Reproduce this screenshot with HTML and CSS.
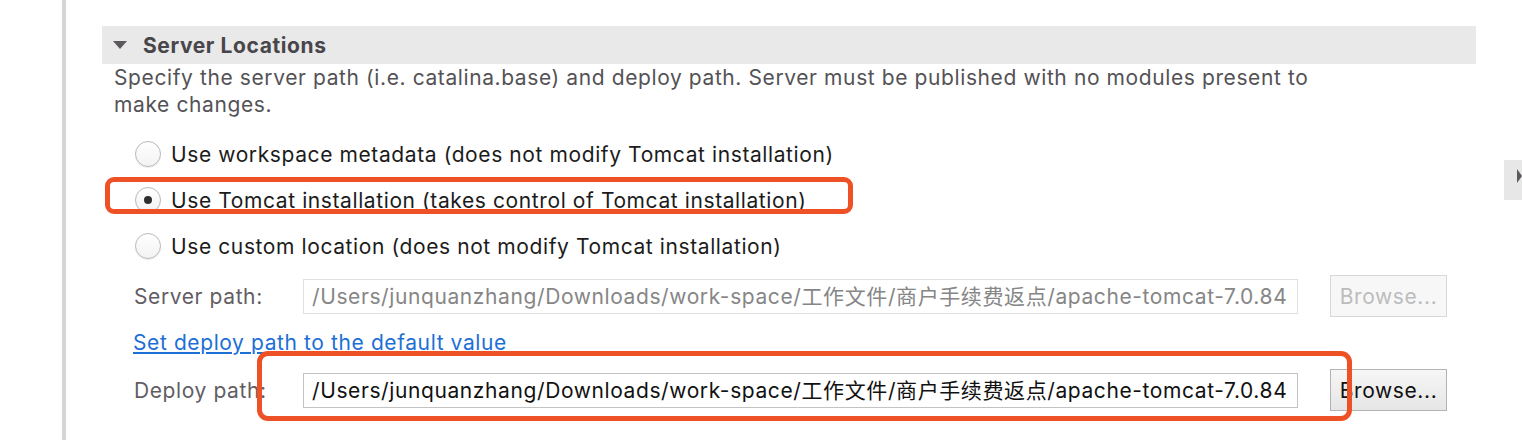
FILE: index.html
```html
<!DOCTYPE html>
<html>

<head>
	<meta charset="utf-8">
	<title>Server Locations</title>
	<meta name="viewport" content="width=device-width, initial-scale=1">
	<link rel="stylesheet" href="styles.css">
</head>

<body>
	<div class='editor'>
		<div class='editor__margin'></div>
		<main class='editor__page'>
			<section class='section'>
				<div class='section__head'>
					<span class='section__twisty'></span>
					<h2 class='section__title'>Server Locations</h2>
				</div>
				<div class='section__body'>
					<p class='desc'>Specify the server path (i.e. catalina.base) and deploy path. Server must be published with no modules present to make changes.</p>

					<div class='radios'>
						<label class='radio'>
							<span class='radio__dot'></span>
							<span>Use workspace metadata (does not modify Tomcat installation)</span>
						</label>
						<label class='radio is-checked'>
							<span class='radio__dot'></span>
							<span>Use Tomcat installation (takes control of Tomcat installation)</span>
						</label>
						<label class='radio'>
							<span class='radio__dot'></span>
							<span>Use custom location (does not modify Tomcat installation)</span>
						</label>
					</div>

					<div class='field is-disabled'>
						<span class='field__label'>Server path:</span>
						<div class='field__input'>/Users/junquanzhang/Downloads/work-space/工作文件/商户手续费返点/apache-tomcat-7.0.84</div>
						<button class='btn'>Browse...</button>
					</div>

					<a class='link' href='#'>Set deploy path to the default value</a>

					<div class='field'>
						<span class='field__label'>Deploy path:</span>
						<div class='field__input'>/Users/junquanzhang/Downloads/work-space/工作文件/商户手续费返点/apache-tomcat-7.0.84</div>
						<button class='btn'>Browse...</button>
					</div>
				</div>
			</section>
		</main>

		<div class='side-tab'></div>

		<!-- red annotation boxes drawn over the screenshot -->
		<div class='mark mark--radio'></div>
		<div class='mark mark--deploy'></div>
	</div>
</body>

</html>
```

FILE: styles.css
```css
* {
	box-sizing: border-box;
}

html,
body {
	margin: 0;
	padding: 0;
}

body {
	background-color: #fff;
	font-family: Inter, "Noto Sans", "Noto Sans CJK SC", sans-serif;
	font-size: 21px;
	letter-spacing: 0.6px;
	color: #1c1c1c;
	overflow: hidden;
}

p {
	margin: 0;
}

.editor {
	position: relative;
	display: flex;
	width: 1522px;
	height: 440px;
}

.editor__margin {
	width: 66px;
	flex: none;
	border-right: 4px solid #d5d5d5;
}

.editor__page {
	flex: 1;
	padding: 26px 0 0 36px;
}

.section {
	width: 1374px;
}

.section__head {
	display: flex;
	align-items: center;
	height: 38px;
	padding-left: 11px;
	background-color: #e9e9e9;
}

.section__twisty {
	width: 0;
	height: 0;
	border-left: 7px solid transparent;
	border-right: 7px solid transparent;
	border-top: 8px solid #5d575e;
	margin-right: 16px;
}

.section__title {
	margin: 0;
	font-size: 21px;
	font-weight: 700;
	color: #48464a;
}

.section__body {
	padding-left: 12px;
}

.desc {
	max-width: 1215px;
	line-height: 27px;
	color: #545256;
}

.radios {
	margin-top: 13px;
	padding-left: 21px;
}

.radio {
	display: flex;
	align-items: center;
	height: 46px;
	gap: 10px;
}

.radio__dot {
	display: flex;
	align-items: center;
	justify-content: center;
	width: 26px;
	height: 26px;
	border-radius: 50%;
	border: 1px solid #b9b9b9;
	background: linear-gradient(#fff, #f3f3f3);
	box-shadow: 0 1px 1px rgba(0, 0, 0, 0.08);
}

.radio.is-checked .radio__dot::after {
	content: '';
	width: 8px;
	height: 8px;
	border-radius: 50%;
	background-color: #2e2e2e;
}

.field {
	display: flex;
	align-items: center;
	height: 42px;
	margin-top: 6px;
	padding-left: 20px;
}

.field__label {
	width: 169px;
	color: #625d63;
}

.field__input {
	width: 995px;
	height: 35px;
	line-height: 33px;
	padding: 0 8px;
	border: 1px solid #c3c3c3;
	white-space: nowrap;
	overflow: hidden;
	color: #111;
}

.btn {
	margin-left: 32px;
	width: 117px;
	height: 42px;
	font: inherit;
	letter-spacing: inherit;
	color: #111;
	border: 1px solid #b3b3b3;
	background: linear-gradient(#f6f6f6, #e6e6e6);
	padding: 0;
}

.field.is-disabled .field__input {
	border-color: #e0e0e0;
	color: #868686;
}

.field.is-disabled .btn {
	border-color: #d8d8d8;
	background: #f7f7f7;
	color: #bcbcbc;
}

.link {
	display: block;
	margin: 13px 0 0 19px;
	line-height: 26px;
	color: #1d6fd6;
	text-decoration: underline;
}

.link + .field {
	margin-top: 13px;
}

.side-tab {
	position: absolute;
	top: 160px;
	right: 0;
	width: 18px;
	height: 40px;
	background-color: #e7e7e7;
}

.side-tab::after {
	content: '';
	position: absolute;
	top: 9px;
	right: 0;
	border-top: 7px solid transparent;
	border-bottom: 7px solid transparent;
	border-left: 5px solid #5d575e;
}

.mark {
	position: absolute;
	border: 5px solid #ee5126;
	border-radius: 9px;
}

.mark--radio {
	left: 105px;
	top: 177px;
	width: 748px;
	height: 37px;
}

.mark--deploy {
	left: 257px;
	top: 351px;
	width: 1095px;
	height: 70px;
	border-radius: 11px;
}
```
